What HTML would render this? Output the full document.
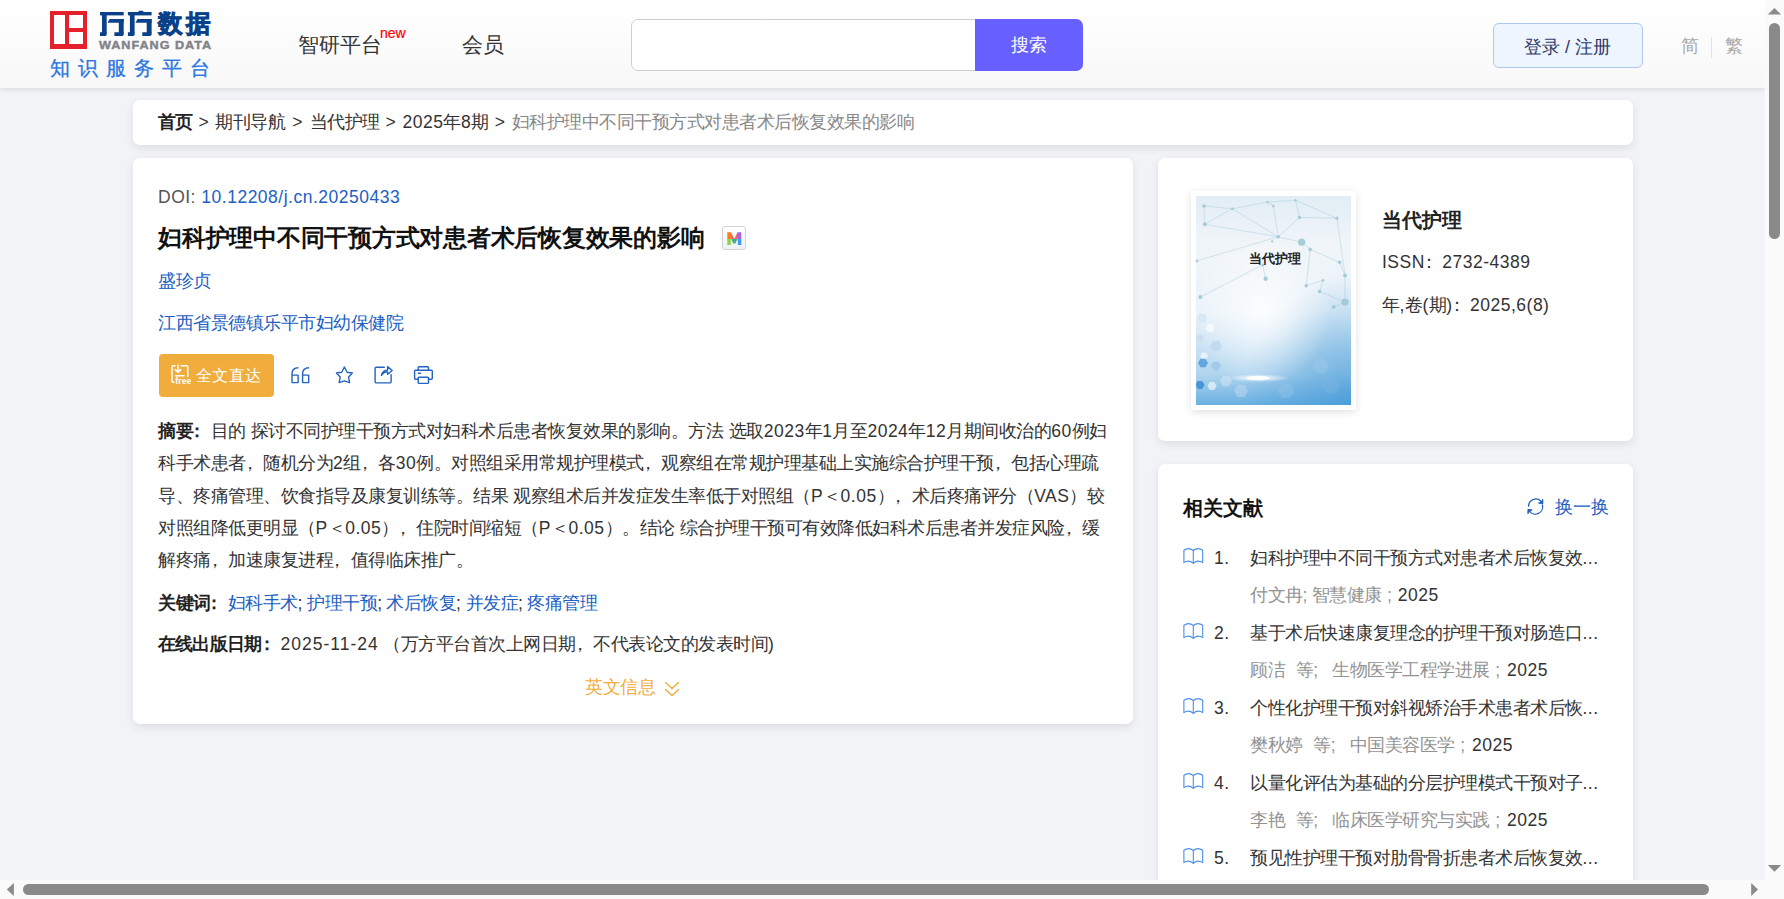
<!DOCTYPE html>
<html><head><meta charset="utf-8">
<style>
*{margin:0;padding:0;box-sizing:border-box}
html,body{width:1784px;height:899px;overflow:hidden}
body{position:relative;background:#f2f3f7;font-family:"Liberation Sans",sans-serif;color:#333}
.a{position:absolute;white-space:nowrap}
.hdr{position:absolute;left:0;top:0;width:1765px;height:88px;background:linear-gradient(#ffffff,#f8f8f9);box-shadow:0 1px 6px rgba(0,0,0,.12)}
.card{position:absolute;background:#fff;border-radius:7px;box-shadow:0 3px 9px rgba(0,0,0,.09)}
.t18{font-size:18px;line-height:18px}
.t17{font-size:17.5px;line-height:17.5px;letter-spacing:-0.5px}
.n{letter-spacing:0.5px}
.blue{color:#2160c3}
.pc{position:relative;left:-5px}
</style></head><body>
<div class="hdr">

  <div class="a" style="left:50px;top:11px;width:37px;height:38px;background:#e5202b"></div>
  <div class="a" style="left:54px;top:15px;width:11px;height:29px;background:#fff"></div>
  <div class="a" style="left:69px;top:15px;width:14px;height:13px;background:#fff"></div>
  <div class="a" style="left:69px;top:32px;width:14px;height:12px;background:#fff"></div>
  <svg class="a" style="left:100.2px;top:12px" width="60" height="26" viewBox="0 0 60 26" overflow="visible"><g fill="#0b4188"><g transform="translate(0,0)"><rect x="0" y="0" width="23.7" height="3.4"/><rect x="2" y="3" width="4.7" height="18"/><path d="M0 20.2H6.7V22.3Q6.7 23.9 5.1 23.9H0Z"/><path d="M7.6 10.8L9.6 7.1H23.7V10.8Z"/><rect x="18.8" y="7.1" width="4.9" height="14"/><path d="M14.4 20.2H23.7V22.3Q23.7 23.9 22.1 23.9H14.4Z"/></g><g transform="translate(27.9,0)"><rect x="0" y="0" width="23.7" height="3.4"/><rect x="2" y="3" width="4.7" height="18"/><path d="M0 20.2H6.7V22.3Q6.7 23.9 5.1 23.9H0Z"/><path d="M7.6 10.8L9.6 7.1H23.7V10.8Z"/><rect x="18.8" y="7.1" width="4.9" height="14"/><path d="M14.4 20.2H23.7V22.3Q23.7 23.9 22.1 23.9H14.4Z"/><path d="M10.3 0.2L11 -1.2H15.1L15.8 0.2Z"/></g></g></svg><div class="a" style="left:157.5px;top:11.5px;font-size:28px;line-height:28px;font-weight:bold;color:#0b4188;-webkit-text-stroke:1px #0b4188;transform:scale(0.86,0.88);transform-origin:0 0">数</div><div class="a" style="left:186px;top:11.5px;font-size:28px;line-height:28px;font-weight:bold;color:#0b4188;-webkit-text-stroke:1px #0b4188;transform:scale(0.86,0.88);transform-origin:0 0">据</div>
  <div class="a" style="left:99px;top:39.5px;font-size:11px;line-height:11px;font-weight:bold;color:#818388;-webkit-text-stroke:0.4px #818388;letter-spacing:0.85px;transform:scaleX(1.15);transform-origin:0 0">WANFANG DATA</div>
  <div class="a" style="left:50px;top:58px;font-size:20px;line-height:20px;color:#2a77e0;letter-spacing:8px;-webkit-text-stroke:0.3px #2a77e0">知识服务平台</div>
  <div class="a" style="left:298px;top:33.5px;font-size:21px;line-height:21px;color:#333">智研平台</div>
  <div class="a" style="left:380px;top:25.5px;font-size:14px;line-height:14px;color:#f00;-webkit-text-stroke:0.2px #f00">new</div>
  <div class="a" style="left:461.5px;top:33.5px;font-size:21px;line-height:21px;color:#333">会员</div>
  <div class="a" style="left:631px;top:19px;width:452px;height:52px;border:1px solid #cfcfcf;border-radius:7px;background:#fff"></div>
  <div class="a" style="left:975px;top:19px;width:108px;height:52px;border-radius:0 7px 7px 0;background:#675fff"></div>
  <div class="a t18" style="left:1011px;top:36px;color:#fff">搜索</div>
  <div class="a" style="left:1493px;top:23px;width:150px;height:45px;border:1px solid #adc8ee;border-radius:6px;background:#eef5fe"></div>
  <div class="a t18" style="left:1524px;top:38px;color:#2d3a6a">登录 / 注册</div>
  <div class="a t18" style="left:1681px;top:37px;color:#a8a8a8">简</div>
  <div class="a" style="left:1711px;top:37px;width:1px;height:21px;background:#e3e3e3"></div>
  <div class="a t18" style="left:1725px;top:37px;color:#a8a8a8">繁</div>

</div>
<div class="card" style="left:133px;top:100px;width:1500px;height:45px"></div>
<div class="card" style="left:133px;top:158px;width:1000px;height:566px"></div>
<div class="card" style="left:1158px;top:158px;width:475px;height:283px"></div>
<div class="card" style="left:1158px;top:464px;width:475px;height:440px"></div>
<div class="a t17" style="left:157.5px;top:114px;color:#222"><b>首页</b></div>
<div class="a t17" style="left:198.5px;top:114px;color:#333">&gt;</div>
<div class="a t17" style="left:215px;top:114px;color:#333">期刊导航</div>
<div class="a t17" style="left:292.2px;top:114px;color:#333">&gt;</div>
<div class="a t17" style="left:309.5px;top:114px;color:#333">当代护理</div>
<div class="a t17" style="left:385.5px;top:114px;color:#333">&gt;</div>
<div class="a t17" style="left:402.5px;top:114px;color:#333"><span class="n">2025</span>年<span class="n">8</span>期</div>
<div class="a t17" style="left:494.8px;top:114px;color:#333">&gt;</div>
<div class="a t17" style="left:511.5px;top:114px;color:#888">妇科护理中不同干预方式对患者术后恢复效果的影响</div>
<div class="a t17" style="left:158px;top:189px;color:#555"><span class="n">DOI: </span><span class="blue"><span class="n">10.12208/j.cn.20250433</span></span></div>
<div class="a" style="left:158px;top:226px;font-size:23.75px;line-height:23.75px;font-weight:bold;color:#111;letter-spacing:-0.25px">妇科护理中不同干预方式对患者术后恢复效果的影响</div>
<div class="a" style="left:722px;top:226px;width:24px;height:24px;border:1px solid #d3d3d3;border-radius:3px;background:linear-gradient(#fff,#eef2f8)"></div>
<svg class="a" style="left:726.5px;top:232px" width="15" height="14" viewBox="0 0 15 14">
<defs><clipPath id="mc"><path d="M0.3 13V0.2H4L7.3 6.8L10.6 0.2H14.3V13H10.8V6.4L8.3 11.6H6.3L3.8 6.4V13Z"/></clipPath></defs>
<g clip-path="url(#mc)">
<rect x="0" y="0" width="5" height="7" fill="#fb7c1e"/>
<rect x="0" y="7" width="5" height="7" fill="#8ed43c"/>
<rect x="5" y="0" width="5" height="7" fill="#e9705c"/>
<rect x="5" y="7" width="5" height="7" fill="#4ea69c"/>
<rect x="10" y="0" width="5" height="7" fill="#b15ee2"/>
<rect x="10" y="7" width="5" height="7" fill="#3f9ceb"/>
</g></svg>
<div class="a t17 blue" style="left:158px;top:273px">盛珍贞</div>
<div class="a t17 blue" style="left:158px;top:315px">江西省景德镇乐平市妇幼保健院</div>
<div class="a" style="left:159px;top:354px;width:115px;height:43px;border-radius:4px;background:#f0ad3c"></div>
<svg class="a" style="left:165px;top:360px" width="30" height="30" viewBox="0 0 30 30" fill="none" stroke="#fff" stroke-width="1.5" stroke-linecap="round" stroke-linejoin="round">
<path d="M10 5.7H8.2Q7 5.7 7 6.9V21.1Q7 22.3 8.2 22.3H9"/>
<path d="M16.2 5.7H21.6Q22.8 5.7 22.8 6.9V16.5"/>
<path d="M13 5.2V12.2M10.2 9.6L13 12.4L15.8 9.6"/>
<path d="M10.6 15.8H19"/>
<text x="10.2" y="24" font-family="Liberation Sans" font-size="8.6" font-weight="bold" fill="#fff" stroke="none" letter-spacing="0.15">free</text>
</svg>
<svg class="a" style="left:285px;top:360px" width="30" height="30" viewBox="0 0 30 30" fill="none" stroke="#2463c2" stroke-width="1.4" stroke-linejoin="round">
<path d="M13.4 7.8C9.3 7.8 7 9.6 7 14V22.6H13.1V15.1H7"/>
<path d="M24 7.8C19.9 7.8 17.6 9.6 17.6 14V22.6H23.7V15.1H17.6"/>
</svg>
<svg class="a" style="left:330px;top:360px" width="30" height="30" viewBox="0 0 30 30" fill="none" stroke="#2463c2" stroke-width="1.4" stroke-linejoin="round">
<path d="M14.4 7L17.1 12.3L22.3 13L18.6 17L19.6 22.7L14.4 20.9L9.2 22.7L10.2 17L6.4 13L11.7 12.3Z"/>
</svg>
<svg class="a" style="left:368px;top:360px" width="30" height="30" viewBox="0 0 30 30" fill="none" stroke="#2463c2" stroke-width="1.4" stroke-linejoin="round" stroke-linecap="round">
<path d="M16.3 7.3H8.3Q7.1 7.3 7.1 8.5V21.7Q7.1 22.9 8.3 22.9H21.9Q23.1 22.9 23.1 21.7V14.8"/>
<path d="M13.4 15.4C14.2 11.8 16.6 10.2 19.6 10.2V6.6L24.2 10.5L19.6 14.3V11.9C17.1 11.8 15 13 13.4 15.4Z"/>
</svg>
<svg class="a" style="left:408px;top:360px" width="30" height="30" viewBox="0 0 30 30" fill="none" stroke="#2463c2" stroke-width="1.4" stroke-linejoin="round" stroke-linecap="round">
<path d="M10.2 19.2H7.5Q6.6 19.2 6.6 18.3V11.1Q6.6 10.2 7.5 10.2H23.4Q24.3 10.2 24.3 11.1V18.3Q24.3 19.2 23.4 19.2H20.5"/>
<path d="M10.2 10.2V7.6Q10.2 6.8 11 6.8H19.7Q20.5 6.8 20.5 7.6V10.2"/>
<rect x="10.2" y="17.2" width="10.3" height="6.2" rx="0.8"/>
<path d="M10.4 13.3H12.5"/>
</svg>
<div class="a" style="left:196px;top:367px;font-size:16.25px;line-height:16.25px;letter-spacing:0.25px;color:#fff">全文直达</div>
<div class="a t17" style="left:158px;top:423px;color:#333"><b style="color:#222">摘要<span class="pc">：</span></b>目的<span class="n"> </span>探讨不同护理干预方式对妇科术后患者恢复效果的影响。方法<span class="n"> </span>选取<span class="n">2023</span>年<span class="n">1</span>月至<span class="n">2024</span>年<span class="n">12</span>月期间收治的<span class="n">60</span>例妇</div>
<div class="a t17" style="left:158px;top:455px;color:#333">科手术患者<span class="pc">，</span>随机分为<span class="n">2</span>组<span class="pc">，</span>各<span class="n">30</span>例。对照组采用常规护理模式<span class="pc">，</span>观察组在常规护理基础上实施综合护理干预<span class="pc">，</span>包括心理疏</div>
<div class="a t17" style="left:158px;top:488px;color:#333">导、疼痛管理、饮食指导及康复训练等。结果<span class="n"> </span>观察组术后并发症发生率低于对照组（<span class="n">P</span>＜<span class="n">0.05</span>）<span class="pc">，</span>术后疼痛评分（<span class="n">VAS</span>）较</div>
<div class="a t17" style="left:158px;top:520px;color:#333">对照组降低更明显（<span class="n">P</span>＜<span class="n">0.05</span>）<span class="pc">，</span>住院时间缩短（<span class="n">P</span>＜<span class="n">0.05</span>）。结论<span class="n"> </span>综合护理干预可有效降低妇科术后患者并发症风险<span class="pc">，</span>缓</div>
<div class="a t17" style="left:158px;top:552px;color:#333">解疼痛<span class="pc">，</span>加速康复进程<span class="pc">，</span>值得临床推广。</div>
<div class="a t17" style="left:158px;top:595px;color:#222"><b>关键词</b></div>
<div class="a t17" style="left:204.5px;top:595px;color:#222"><b>：</b></div>
<div class="a t17" style="left:227.5px;top:595px;color:#333"><span class="blue">妇科手术</span><span class="n">;</span></div>
<div class="a t17" style="left:307.3px;top:595px;color:#333"><span class="blue">护理干预</span><span class="n">;</span></div>
<div class="a t17" style="left:386px;top:595px;color:#333"><span class="blue">术后恢复</span><span class="n">;</span></div>
<div class="a t17" style="left:465.5px;top:595px;color:#333"><span class="blue">并发症</span><span class="n">;</span></div>
<div class="a t17" style="left:527px;top:595px;color:#333"><span class="blue">疼痛管理</span></div>
<div class="a t17" style="left:158px;top:636px;color:#222"><b style="letter-spacing:-0.8px">在线出版日期</b></div>
<div class="a t17" style="left:258px;top:636px;color:#222"><b>：</b></div>
<div class="a t17" style="left:280.5px;top:636px;color:#333;letter-spacing:1px">2025-11-24</div>
<div class="a t17" style="left:383px;top:636px;color:#333">（万方平台首次上网日期<span class="pc">，</span>不代表论文的发表时间<span class="n">)</span></div>
<div class="a t17" style="left:585px;top:679px;color:#f0ad3c">英文信息</div>
<svg class="a" style="left:663px;top:680px" width="18" height="18" viewBox="0 0 18 18" fill="none" stroke="#f0ad3c" stroke-width="1.4" stroke-linejoin="round" stroke-linecap="round">
<path d="M2.5 2.6L9 8.6L15.5 2.6M2.5 9.4L9 15.6L15.5 9.4"/>
</svg>
<div class="a" style="left:1191px;top:191px;width:165px;height:219px;background:#fff;box-shadow:0 2px 8px rgba(0,0,0,.12)"></div>
<svg class="a" style="left:1196px;top:196px" width="155" height="209" viewBox="0 0 155 209"><defs><linearGradient id="cg" x1="0" y1="0" x2="0" y2="1"><stop offset="0" stop-color="#e2edf5"/><stop offset="0.25" stop-color="#f1f5f9"/><stop offset="0.55" stop-color="#e9f2f9"/><stop offset="0.85" stop-color="#b2d6ef"/><stop offset="1" stop-color="#69b0e0"/></linearGradient><radialGradient id="cr" cx="0.5" cy="0.5" r="0.5"><stop offset="0" stop-color="#3f96d6" stop-opacity="0.7"/><stop offset="1" stop-color="#3f96d6" stop-opacity="0"/></radialGradient><radialGradient id="cw" cx="0.5" cy="0.5" r="0.5"><stop offset="0" stop-color="#fff" stop-opacity="0.85"/><stop offset="1" stop-color="#fff" stop-opacity="0"/></radialGradient><radialGradient id="cf" cx="0.5" cy="0.5" r="0.5"><stop offset="0" stop-color="#fff" stop-opacity="1"/><stop offset="1" stop-color="#fff" stop-opacity="0"/></radialGradient></defs><rect width="155" height="209" fill="url(#cg)"/><ellipse cx="155" cy="209" rx="110" ry="130" fill="url(#cr)"/><ellipse cx="65" cy="115" rx="70" ry="75" fill="url(#cw)"/><g stroke="#a3cdd9" stroke-width="0.7" opacity="0.65"><line x1="8" y1="10" x2="36.3" y2="12.8"/><line x1="36.3" y1="12.8" x2="8.8" y2="28.3"/><line x1="36.3" y1="12.8" x2="71.5" y2="6.1"/><line x1="36.3" y1="12.8" x2="82.2" y2="40.8"/><line x1="71.5" y1="6.1" x2="99.5" y2="4.3"/><line x1="99.5" y1="4.3" x2="103.5" y2="21.4"/><line x1="103.5" y1="21.4" x2="82.2" y2="40.8"/><line x1="103.5" y1="21.4" x2="141" y2="22.2"/><line x1="82.2" y1="40.8" x2="105.7" y2="46.2"/><line x1="105.7" y1="46.2" x2="114.2" y2="53.4"/><line x1="114.2" y1="53.4" x2="143.6" y2="66.2"/><line x1="114.2" y1="53.4" x2="110.2" y2="89.7"/><line x1="110.2" y1="89.7" x2="127" y2="84.3"/><line x1="0.8" y1="64.9" x2="82.2" y2="40.8"/><line x1="4.3" y1="100.9" x2="66.7" y2="68.9"/><line x1="8.8" y1="28.3" x2="82.2" y2="40.8"/><line x1="99.5" y1="4.3" x2="141" y2="22.2"/><line x1="141" y1="22.2" x2="149" y2="79.5"/><line x1="123.6" y1="95.5" x2="149" y2="106.2"/><line x1="143.6" y1="66.2" x2="149" y2="79.5"/><line x1="149" y1="79.5" x2="149" y2="106.2"/><line x1="149" y1="106.2" x2="137.7" y2="111"/><line x1="127" y1="84.3" x2="123.6" y2="95.5"/><line x1="71.5" y1="6.1" x2="77.4" y2="10.1"/><line x1="77.4" y1="10.1" x2="82.2" y2="40.8"/><line x1="66.7" y1="68.9" x2="69.7" y2="82.7"/><line x1="8" y1="10" x2="8.8" y2="28.3"/></g><g fill="#9fcad6" opacity="0.9"><circle cx="8" cy="10" r="1.8"/><circle cx="36.3" cy="12.8" r="1.3"/><circle cx="8.8" cy="28.3" r="2"/><circle cx="71.5" cy="6.1" r="1.2"/><circle cx="77.4" cy="10.1" r="1.3"/><circle cx="99.5" cy="4.3" r="1.2"/><circle cx="103.5" cy="21.4" r="1.8"/><circle cx="141" cy="22.2" r="1.6"/><circle cx="82.2" cy="40.8" r="1.8"/><circle cx="105.7" cy="46.2" r="3.6"/><circle cx="114.2" cy="53.4" r="1.8"/><circle cx="76.3" cy="45.4" r="1.2"/><circle cx="143.6" cy="66.2" r="1.8"/><circle cx="149" cy="79.5" r="2"/><circle cx="69.7" cy="82.7" r="2.2"/><circle cx="110.2" cy="89.7" r="1.8"/><circle cx="123.6" cy="95.5" r="1.8"/><circle cx="127" cy="84.3" r="1.3"/><circle cx="4.3" cy="100.9" r="2"/><circle cx="149" cy="106.2" r="3.6"/><circle cx="137.7" cy="111" r="2"/><circle cx="66.7" cy="68.9" r="1.5"/><circle cx="0.8" cy="64.9" r="1.5"/></g><polygon points="11.0,122.0 8.5,126.3 3.5,126.3 1.0,122.0 3.5,117.7 8.5,117.7" fill="#d6e6f5" opacity="0.9"/><polygon points="18.5,132.0 16.2,135.9 11.8,135.9 9.5,132.0 11.7,128.1 16.2,128.1" fill="#fff" opacity="0.7"/><polygon points="8.0,142.0 6.0,145.5 2.0,145.5 0.0,142.0 2.0,138.5 6.0,138.5" fill="#c7dcf0" opacity="0.8"/><polygon points="26.0,150.0 23.0,155.2 17.0,155.2 14.0,150.0 17.0,144.8 23.0,144.8" fill="#bcd6ee" opacity="0.7"/><polygon points="12.0,160.0 10.0,163.5 6.0,163.5 4.0,160.0 6.0,156.5 10.0,156.5" fill="#fff" opacity="0.6"/><polygon points="12.0,167.0 9.5,171.3 4.5,171.3 2.0,167.0 4.5,162.7 9.5,162.7" fill="#5aa0db" opacity="0.9"/><polygon points="25.0,170.0 22.5,174.3 17.5,174.3 15.0,170.0 17.5,165.7 22.5,165.7" fill="#9cc6ea" opacity="0.8"/><polygon points="8.5,189.0 6.2,192.9 1.8,192.9 -0.5,189.0 1.7,185.1 6.2,185.1" fill="#3f8fd6" opacity="0.9"/><polygon points="20.5,190.0 18.2,193.9 13.8,193.9 11.5,190.0 13.7,186.1 18.2,186.1" fill="#fff" opacity="0.6"/><polygon points="36.0,185.0 33.0,190.2 27.0,190.2 24.0,185.0 27.0,179.8 33.0,179.8" fill="#cfe2f3" opacity="0.6"/><polygon points="52.0,195.0 48.5,201.1 41.5,201.1 38.0,195.0 41.5,188.9 48.5,188.9" fill="#bfd9ef" opacity="0.5"/><polygon points="98.0,195.0 94.0,201.9 86.0,201.9 82.0,195.0 86.0,188.1 94.0,188.1" fill="#9cc8ea" opacity="0.35"/><polygon points="133.0,170.0 129.0,176.9 121.0,176.9 117.0,170.0 121.0,163.1 129.0,163.1" fill="#a7cdec" opacity="0.35"/><polygon points="144.0,190.0 139.5,197.8 130.5,197.8 126.0,190.0 130.5,182.2 139.5,182.2" fill="#7fb6e4" opacity="0.35"/><ellipse cx="62" cy="182" rx="32" ry="4" fill="url(#cf)"/><ellipse cx="62" cy="182" rx="12" ry="2.2" fill="#fff" opacity="0.9"/></svg>
<div class="a" style="left:1248.5px;top:252px;font-size:13px;line-height:13px;font-weight:bold;color:#222">当代护理</div>
<div class="a" style="left:1382px;top:210px;font-size:20px;line-height:20px;font-weight:bold;color:#222">当代护理</div>
<div class="a t17" style="left:1382px;top:254px;color:#333"><span class="n">ISSN</span><span class="pc">：</span><span class="n">2732-4389</span></div>
<div class="a t17" style="left:1382px;top:297px;color:#333">年<span class="n">,</span>卷<span class="n">(</span>期<span class="n">)</span><span class="pc">：</span><span class="n">2025,6(8)</span></div>
<div class="a" style="left:1183px;top:498px;font-size:20px;line-height:20px;font-weight:bold;color:#111">相关文献</div>
<div class="a t17 blue" style="left:1555px;top:499px;letter-spacing:0px">换一换</div>
<svg class="a" style="left:1520px;top:490px" width="30" height="30" viewBox="0 0 30 30" fill="none" stroke="#2463c2" stroke-width="1.3" stroke-linecap="round">
<path d="M8.6 16.2A7.3 7.3 0 0 1 21.6 11.8"/>
<path d="M22.3 14.8A7.3 7.3 0 0 1 9.3 21"/>
<path d="M22.7 9.6L22.6 13.4L18.9 13" fill="#2463c2" stroke-linejoin="round"/>
<path d="M8 23.4L8.1 19.6L11.8 20" fill="#2463c2" stroke-linejoin="round"/>
</svg>
<svg class="a" style="left:1178px;top:540px" width="30" height="30" viewBox="0 0 30 30" fill="none" stroke="#4b8fe6" stroke-width="1.1" stroke-linejoin="round">
<path d="M5.9 22.6V10.2C9.2 7.9 12.5 8.2 15.3 10.5C18.1 8.2 21.4 7.9 24.7 10.2V22.6C21.4 20.4 18.1 20.7 15.3 23.4C12.5 20.7 9.2 20.4 5.9 22.6Z"/>
<path d="M15.3 10.5V23.4"/>
</svg>
<div class="a t17" style="left:1214px;top:550px;color:#333"><span class="n">1.</span></div>
<div class="a t17" style="left:1250px;top:550px;color:#333">妇科护理中不同干预方式对患者术后恢复效<span class="n">...</span></div>
<div class="a t17" style="left:1250px;top:587px;color:#939393">付文冉<span class="n">; </span><span style='margin-left:-1.5px'></span>智慧健康<span class="n"> ; </span><span style="color:#333"><span class="n">2025</span></span></div>
<svg class="a" style="left:1178px;top:615px" width="30" height="30" viewBox="0 0 30 30" fill="none" stroke="#4b8fe6" stroke-width="1.1" stroke-linejoin="round">
<path d="M5.9 22.6V10.2C9.2 7.9 12.5 8.2 15.3 10.5C18.1 8.2 21.4 7.9 24.7 10.2V22.6C21.4 20.4 18.1 20.7 15.3 23.4C12.5 20.7 9.2 20.4 5.9 22.6Z"/>
<path d="M15.3 10.5V23.4"/>
</svg>
<div class="a t17" style="left:1214px;top:625px;color:#333"><span class="n">2.</span></div>
<div class="a t17" style="left:1250px;top:625px;color:#333">基于术后快速康复理念的护理干预对肠造口<span class="n">...</span></div>
<div class="a t17" style="left:1250px;top:662px;color:#939393">顾洁<span class="n">&nbsp;</span><span class="n"> </span>等<span class="n">;</span><span class="n">&nbsp;</span><span class="n"> </span><span style='margin-left:3px'></span>生物医学工程学进展<span class="n"> ;</span><span style='margin-left:1px'></span><span class="n"> </span><span style="color:#333"><span class="n">2025</span></span></div>
<svg class="a" style="left:1178px;top:690px" width="30" height="30" viewBox="0 0 30 30" fill="none" stroke="#4b8fe6" stroke-width="1.1" stroke-linejoin="round">
<path d="M5.9 22.6V10.2C9.2 7.9 12.5 8.2 15.3 10.5C18.1 8.2 21.4 7.9 24.7 10.2V22.6C21.4 20.4 18.1 20.7 15.3 23.4C12.5 20.7 9.2 20.4 5.9 22.6Z"/>
<path d="M15.3 10.5V23.4"/>
</svg>
<div class="a t17" style="left:1214px;top:700px;color:#333"><span class="n">3.</span></div>
<div class="a t17" style="left:1250px;top:700px;color:#333">个性化护理干预对斜视矫治手术患者术后恢<span class="n">...</span></div>
<div class="a t17" style="left:1250px;top:737px;color:#939393">樊秋婷<span class="n">&nbsp;</span><span class="n"> </span>等<span class="n">;</span><span class="n">&nbsp;</span><span class="n"> </span><span style='margin-left:3px'></span>中国美容医学<span class="n"> ;</span><span style='margin-left:1px'></span><span class="n"> </span><span style="color:#333"><span class="n">2025</span></span></div>
<svg class="a" style="left:1178px;top:765px" width="30" height="30" viewBox="0 0 30 30" fill="none" stroke="#4b8fe6" stroke-width="1.1" stroke-linejoin="round">
<path d="M5.9 22.6V10.2C9.2 7.9 12.5 8.2 15.3 10.5C18.1 8.2 21.4 7.9 24.7 10.2V22.6C21.4 20.4 18.1 20.7 15.3 23.4C12.5 20.7 9.2 20.4 5.9 22.6Z"/>
<path d="M15.3 10.5V23.4"/>
</svg>
<div class="a t17" style="left:1214px;top:775px;color:#333"><span class="n">4.</span></div>
<div class="a t17" style="left:1250px;top:775px;color:#333">以量化评估为基础的分层护理模式干预对子<span class="n">...</span></div>
<div class="a t17" style="left:1250px;top:812px;color:#939393">李艳<span class="n">&nbsp;</span><span class="n"> </span>等<span class="n">;</span><span class="n">&nbsp;</span><span class="n"> </span><span style='margin-left:3px'></span>临床医学研究与实践<span class="n"> ;</span><span style='margin-left:1px'></span><span class="n"> </span><span style="color:#333"><span class="n">2025</span></span></div>
<svg class="a" style="left:1178px;top:840px" width="30" height="30" viewBox="0 0 30 30" fill="none" stroke="#4b8fe6" stroke-width="1.1" stroke-linejoin="round">
<path d="M5.9 22.6V10.2C9.2 7.9 12.5 8.2 15.3 10.5C18.1 8.2 21.4 7.9 24.7 10.2V22.6C21.4 20.4 18.1 20.7 15.3 23.4C12.5 20.7 9.2 20.4 5.9 22.6Z"/>
<path d="M15.3 10.5V23.4"/>
</svg>
<div class="a t17" style="left:1214px;top:850px;color:#333"><span class="n">5.</span></div>
<div class="a t17" style="left:1250px;top:850px;color:#333">预见性护理干预对肋骨骨折患者术后恢复效<span class="n">...</span></div>
<div class="a" style="left:1765px;top:0;width:19px;height:899px;background:#fafafa"></div>
<div class="a" style="left:0;top:880px;width:1784px;height:19px;background:#fafafa"></div>
<div class="a" style="left:1769px;top:23px;width:11px;height:216px;border-radius:6px;background:#8a8a8a"></div>
<div class="a" style="left:23px;top:884px;width:1686px;height:11px;border-radius:6px;background:#8a8a8a"></div>
<svg class="a" style="left:0;top:0" width="1784" height="899" viewBox="0 0 1784 899"><g fill="#8a8a8a">
<polygon points="1774.5,8 1781.2,14.6 1767.8,14.6"/>
<polygon points="1767.8,865 1781.2,865 1774.5,871.8"/>
<polygon points="6.8,889.4 13.9,882.9 13.9,895.9"/>
<polygon points="1751.2,883 1758,889.4 1751.2,896"/>
</g></svg>
</body></html>
